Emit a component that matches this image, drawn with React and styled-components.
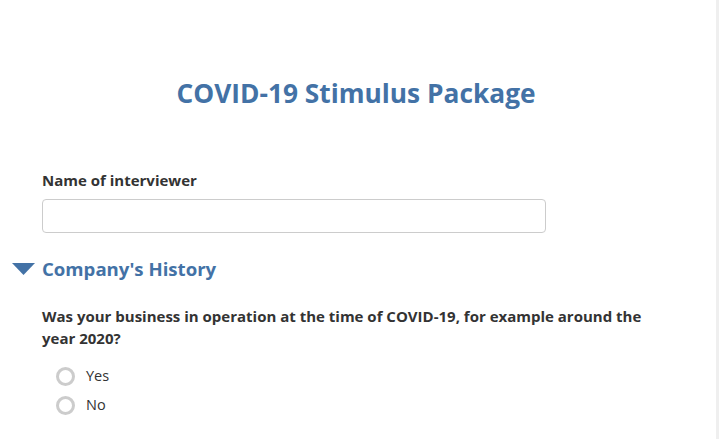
import React from "react";
import styled, { createGlobalStyle } from "styled-components";

const Global = createGlobalStyle`
  html, body { margin: 0; padding: 0; background: #fff; }
  body { font-family: "Open Sans", "Noto Sans", sans-serif; color: #333; }
`;

const Page = styled.div`
  display: flex;
  width: 719px;
  height: 439px;
  overflow: hidden;
`;

const Main = styled.div`
  flex: 1;
  padding: 76px 0 0 0;
`;

const Edge = styled.div`
  width: 3px;
  background: #efefef;
`;

const Title = styled.h1`
  margin: 0 0 60px;
  padding-right: 4px;
  text-align: center;
  font-size: 26.3px;
  font-weight: 700;
  line-height: 34px;
  color: #4372a6;
`;

const Field = styled.div`
  padding-left: 42px;
`;

const Label = styled.div`
  font-size: 15px;
  font-weight: 700;
  line-height: 20px;
  color: #333;
  margin-bottom: 9px;
`;

const Input = styled.div`
  box-sizing: border-box;
  width: 504px;
  height: 34px;
  border: 1px solid #ccc;
  border-radius: 4px;
`;

const SectionHeader = styled.div`
  display: flex;
  align-items: center;
  gap: 7px;
  margin: 23px 0 0 12px;
`;

const Caret = styled.svg`
  width: 23px;
  height: 12px;
`;

const SectionTitle = styled.h2`
  margin: 0;
  font-size: 18.6px;
  font-weight: 700;
  line-height: 26px;
  color: #4372a6;
`;

const Question = styled.div`
  padding: 0 0 0 42px;
  width: 610px;
  margin-top: 23px;
  font-size: 15px;
  font-weight: 700;
  line-height: 22px;
  color: #333;
`;

const Options = styled.div`
  display: flex;
  flex-direction: column;
  gap: 9px;
  padding-left: 56px;
  margin-top: 17px;
`;

const Option = styled.label`
  display: flex;
  align-items: center;
  gap: 11px;
  font-size: 14.5px;
  line-height: 20px;
  color: #333;
`;

const Radio = styled.span`
  box-sizing: border-box;
  width: 19px;
  height: 19px;
  border-radius: 50%;
  border: 3px solid #ccc;
  background: #fff;
`;

export default function App() {
  return (
    <Page>
      <Global />
      <Main>
        <Title>COVID-19 Stimulus Package</Title>
        <Field>
          <Label>Name of interviewer</Label>
          <Input />
        </Field>
        <SectionHeader>
          <Caret viewBox="0 0 23 12">
            <polygon points="0,0 23,0 11.5,12" fill="#4372a6" />
          </Caret>
          <SectionTitle>Company's History</SectionTitle>
        </SectionHeader>
        <Question>
          Was your business in operation at the time of COVID-19, for example around the year 2020?
        </Question>
        <Options>
          <Option><Radio />Yes</Option>
          <Option><Radio />No</Option>
        </Options>
      </Main>
      <Edge />
    </Page>
  );
}
